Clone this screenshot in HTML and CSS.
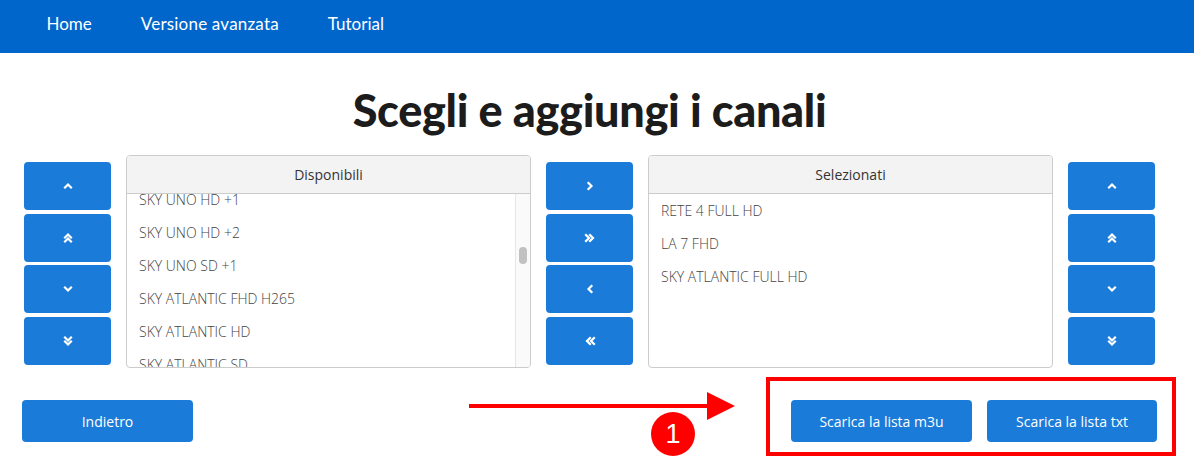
FILE: index.html
```html
<!DOCTYPE html>
<html lang="it">
<head>
<meta charset="utf-8">
<title>Scegli e aggiungi i canali</title>
<link rel="stylesheet" href="styles.css">
</head>
<body>
<nav class="topnav">
  <a class="navlink" href="#">Home</a>
  <a class="navlink" href="#">Versione avanzata</a>
  <a class="navlink" href="#">Tutorial</a>
</nav>

<main class="page">
  <h1 class="title">Scegli e aggiungi i canali</h1>

  <section class="picker">
    <div class="btncol">
      <button class="btn icon-btn" title="Su"><svg viewBox="0 0 10 10" width="10" height="10"><path d="M2 6.5 L5 3.5 L8 6.5" /></svg></button>
      <button class="btn icon-btn" title="In cima"><svg viewBox="0 0 10 12" width="10" height="12"><path d="M2 5.5 L5 2.5 L8 5.5 M2 9.5 L5 6.5 L8 9.5" /></svg></button>
      <button class="btn icon-btn" title="Giù"><svg viewBox="0 0 10 10" width="10" height="10"><path d="M2 3.5 L5 6.5 L8 3.5" /></svg></button>
      <button class="btn icon-btn" title="In fondo"><svg viewBox="0 0 10 12" width="10" height="12"><path d="M2 2.5 L5 5.5 L8 2.5 M2 6.5 L5 9.5 L8 6.5" /></svg></button>
    </div>

    <div class="panel">
      <div class="panel-head">Disponibili</div>
      <div class="panel-body">
        <div class="list-viewport">
          <ul class="list scrolled">
            <li>SKY UNO HD +1</li>
            <li>SKY UNO HD +2</li>
            <li>SKY UNO SD +1</li>
            <li>SKY ATLANTIC FHD H265</li>
            <li>SKY ATLANTIC HD</li>
            <li>SKY ATLANTIC SD</li>
          </ul>
        </div>
        <div class="scrolltrack"><div class="scrollthumb"></div></div>
      </div>
    </div>

    <div class="btncol">
      <button class="btn icon-btn" title="Aggiungi"><svg viewBox="0 0 10 10" width="10" height="10"><path d="M3.5 2 L6.5 5 L3.5 8" /></svg></button>
      <button class="btn icon-btn" title="Aggiungi tutti"><svg viewBox="0 0 12 10" width="12" height="10"><path d="M2 2 L5 5 L2 8 M6 2 L9 5 L6 8" /></svg></button>
      <button class="btn icon-btn" title="Rimuovi"><svg viewBox="0 0 10 10" width="10" height="10"><path d="M6.5 2 L3.5 5 L6.5 8" /></svg></button>
      <button class="btn icon-btn" title="Rimuovi tutti"><svg viewBox="0 0 12 10" width="12" height="10"><path d="M6 2 L3 5 L6 8 M10 2 L7 5 L10 8" /></svg></button>
    </div>

    <div class="panel">
      <div class="panel-head">Selezionati</div>
      <div class="panel-body">
        <div class="list-viewport">
          <ul class="list">
            <li>RETE 4 FULL HD</li>
            <li>LA 7 FHD</li>
            <li>SKY ATLANTIC FULL HD</li>
          </ul>
        </div>
      </div>
    </div>

    <div class="btncol">
      <button class="btn icon-btn" title="Su"><svg viewBox="0 0 10 10" width="10" height="10"><path d="M2 6.5 L5 3.5 L8 6.5" /></svg></button>
      <button class="btn icon-btn" title="In cima"><svg viewBox="0 0 10 12" width="10" height="12"><path d="M2 5.5 L5 2.5 L8 5.5 M2 9.5 L5 6.5 L8 9.5" /></svg></button>
      <button class="btn icon-btn" title="Giù"><svg viewBox="0 0 10 10" width="10" height="10"><path d="M2 3.5 L5 6.5 L8 3.5" /></svg></button>
      <button class="btn icon-btn" title="In fondo"><svg viewBox="0 0 10 12" width="10" height="12"><path d="M2 2.5 L5 5.5 L8 2.5 M2 6.5 L5 9.5 L8 6.5" /></svg></button>
    </div>
  </section>

  <section class="actions">
    <button class="btn wide-btn">Indietro</button>
    <div class="downloads">
      <button class="btn wide-btn m3u">Scarica la lista m3u</button>
      <button class="btn wide-btn">Scarica la lista txt</button>
      <div class="highlight-box"></div>
      <div class="annot-arrow"><span class="arrow-line"></span><span class="arrow-head"></span></div>
      <div class="annot-badge">1</div>
    </div>
  </section>
</main>
</body>
</html>
```

FILE: styles.css
```css
* { box-sizing: border-box; }

html, body {
  margin: 0;
  padding: 0;
  background: #ffffff;
}

body {
  font-family: "Open Sans", "Liberation Sans", sans-serif;
  color: #333333;
  width: 1194px;
  height: 461px;
  overflow: hidden;
}

.topnav {
  height: 53px;
  background: #0066cc;
  display: flex;
  align-items: center;
  padding-left: 22px;
  padding-bottom: 6px;
}

.navlink {
  font-family: "Lato", "Liberation Sans", sans-serif;
  font-size: 17px;
  font-weight: 400;
  color: #ffffff;
  text-decoration: none;
  padding: 0 24.5px;
}

.navlink:nth-child(2) {
  letter-spacing: 0.2px;
}

.page {
  width: 1131px;
  margin-left: 24px;
}

.title {
  margin: 0;
  padding-top: 30px;
  height: 102px;
  text-align: center;
  font-family: "Lato", "Liberation Sans", sans-serif;
  font-weight: 900;
  font-size: 45px;
  line-height: 54px;
  color: #1c1c1c;
  letter-spacing: -0.3px;
}

.picker {
  display: grid;
  grid-template-columns: 87px 1fr 87px 1fr 87px;
  column-gap: 15px;
  height: 213px;
}

.btncol {
  display: flex;
  flex-direction: column;
  gap: 3.5px;
  padding-top: 7px;
}

.btn {
  background: #1b7bd9;
  border: none;
  border-radius: 4px;
  color: #ffffff;
  font-family: "Open Sans", "Liberation Sans", sans-serif;
  cursor: pointer;
  padding: 0;
}

.icon-btn {
  height: 48px;
  width: 87px;
  display: flex;
  align-items: center;
  justify-content: center;
}

.icon-btn svg path {
  fill: none;
  stroke: #ffffff;
  stroke-width: 2.2;
  stroke-linecap: square;
  stroke-linejoin: miter;
}

.panel {
  border: 1px solid #cccccc;
  border-radius: 4px;
  display: flex;
  flex-direction: column;
  overflow: hidden;
  height: 213px;
}

.panel-head {
  height: 38px;
  flex: 0 0 38px;
  background: #f3f3f3;
  border-bottom: 1px solid #cccccc;
  display: flex;
  align-items: center;
  justify-content: center;
  font-size: 14px;
  color: #333333;
}

.panel-body {
  flex: 1;
  display: flex;
  min-height: 0;
}

.list-viewport {
  flex: 1;
  overflow: hidden;
}

.list {
  list-style: none;
  margin: 0;
  padding: 0;
}

.list.scrolled {
  margin-top: -11px;
}

.list li {
  height: 33px;
  line-height: 33px;
  padding-left: 12px;
  font-size: 14px;
  font-weight: 300;
  color: #444444;
  white-space: nowrap;
}

.scrolltrack {
  width: 15px;
  flex: 0 0 15px;
  background: #fafafa;
  border-left: 1px solid #e6e6e6;
  display: flex;
  justify-content: center;
  padding-top: 53px;
}

.scrollthumb {
  width: 8px;
  height: 17px;
  border-radius: 4px;
  background: #c1c1c1;
}

.actions {
  display: flex;
  justify-content: space-between;
  align-items: flex-start;
  margin: 32px -2px 0 -2px;
}

.wide-btn {
  height: 42px;
  font-size: 14px;
  font-weight: 400;
}

.actions > .wide-btn {
  width: 171px;
}

.downloads {
  position: relative;
  display: flex;
  gap: 15px;
}

.downloads .wide-btn {
  width: 170px;
}

.downloads .m3u {
  width: 181px;
}

.highlight-box {
  position: absolute;
  left: -25px;
  top: -23px;
  width: 410px;
  height: 79px;
  border: 4px solid #ff0000;
  pointer-events: none;
}

.annot-arrow {
  position: absolute;
  left: -322px;
  top: -8px;
  width: 266px;
  height: 28px;
  display: flex;
  align-items: center;
}

.arrow-line {
  width: 240px;
  height: 4px;
  background: #ff0000;
}

.arrow-head {
  width: 0;
  height: 0;
  border-top: 14px solid transparent;
  border-bottom: 14px solid transparent;
  border-left: 28px solid #ff0000;
  margin-left: -2px;
}

.annot-badge {
  position: absolute;
  left: -140px;
  top: 12px;
  width: 44px;
  height: 44px;
  border-radius: 50%;
  background: #ff0000;
  color: #ffffff;
  font-family: "Liberation Sans", Arial, sans-serif;
  font-size: 27px;
  line-height: 44px;
  text-align: center;
}
```
